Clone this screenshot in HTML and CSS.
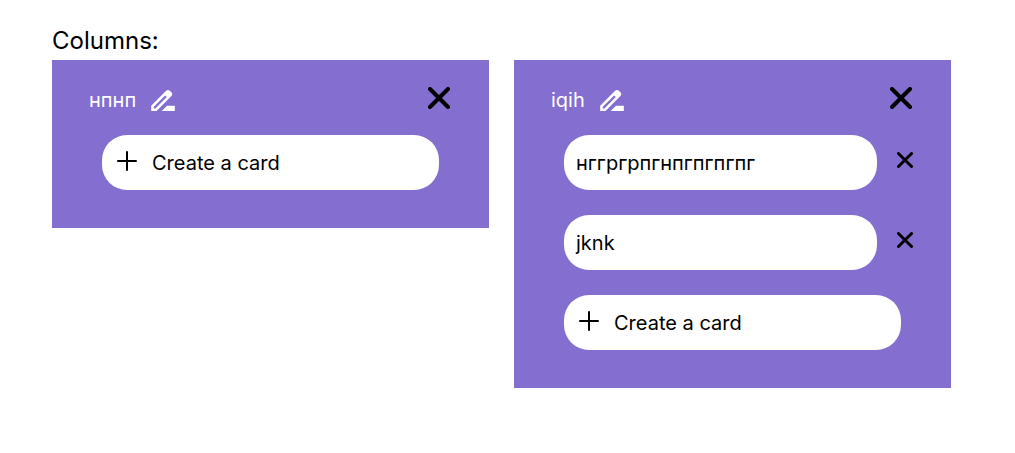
FILE: index.html
```html
<!DOCTYPE html>
<html lang="en">
<head>
<meta charset="utf-8">
<meta name="viewport" content="width=device-width, initial-scale=1">
<title>Columns</title>
<link rel="stylesheet" href="styles.css">
</head>
<body>
<svg class="sprite" aria-hidden="true">
  <symbol id="cross" viewBox="0 0 22 22"><path d="M2 2 20 20M20 2 2 20" fill="none" stroke="currentColor" stroke-width="4" stroke-linecap="round"/></symbol>
  <symbol id="plus" viewBox="0 0 20 20"><path d="M10 1V19M1 10H19" fill="none" stroke="currentColor" stroke-width="2" stroke-linecap="round"/></symbol>
  <symbol id="pencil" viewBox="3 4 18 16"><path d="M18.41 5.8 17.2 4.59c-.78-.78-2.05-.78-2.83 0l-2.68 2.68L3 15.96V20h4.04l8.74-8.74 2.63-2.63c.79-.78.79-2.05 0-2.83zM6.21 18H5v-1.21l8.66-8.66 1.21 1.21zM11 20l4-4h6v4z" fill="currentColor"/></symbol>
</svg>
<main class="board">
  <h1 class="board-title">Columns:</h1>
  <div class="columns">
    <section class="column">
      <header class="column-header">
        <h2 class="column-title">нпнп</h2>
        <button class="icon-button edit" type="button" aria-label="Edit column"><svg class="icon-pencil"><use href="#pencil"/></svg></button>
        <button class="icon-button close" type="button" aria-label="Delete column"><svg class="icon-cross"><use href="#cross"/></svg></button>
      </header>
      <div class="cards">
        <button class="card create" type="button"><svg class="icon-plus"><use href="#plus"/></svg>Create a card</button>
      </div>
    </section>
    <section class="column">
      <header class="column-header">
        <h2 class="column-title">iqih</h2>
        <button class="icon-button edit" type="button" aria-label="Edit column"><svg class="icon-pencil"><use href="#pencil"/></svg></button>
        <button class="icon-button close" type="button" aria-label="Delete column"><svg class="icon-cross"><use href="#cross"/></svg></button>
      </header>
      <div class="cards">
        <div class="card-row">
          <div class="card">нггргрпгнпгпгпгпг</div>
          <button class="icon-button remove" type="button" aria-label="Delete card"><svg class="icon-cross-small"><use href="#cross"/></svg></button>
        </div>
        <div class="card-row">
          <div class="card">jknk</div>
          <button class="icon-button remove" type="button" aria-label="Delete card"><svg class="icon-cross-small"><use href="#cross"/></svg></button>
        </div>
        <button class="card create" type="button"><svg class="icon-plus"><use href="#plus"/></svg>Create a card</button>
      </div>
    </section>
  </div>
</main>
</body>
</html>
```
FILE: styles.css
```css
* {
  box-sizing: border-box;
}

body {
  margin: 0;
  background: #fff;
  color: #000;
  font-family: Inter, "Liberation Sans", sans-serif;
  font-size: 20px;
  line-height: 24px;
}

.sprite {
  display: none;
}

.board {
  padding: 25px 64px 25px 52px;
}

.board-title {
  margin: 0 0 3px;
  font-size: 24px;
  font-weight: 400;
  line-height: 32px;
}

.columns {
  display: grid;
  grid-template-columns: 1fr 1fr;
  align-items: start;
  gap: 25px;
}

.column {
  padding: 25px 37px 38px;
  background: #846ecf;
}

.column-header {
  display: flex;
  align-items: flex-start;
  gap: 15px;
  height: 50px;
}

.column-title {
  margin: 0;
  padding-top: 3px;
  color: #fff;
  font-size: 20px;
  font-weight: 400;
}

.icon-button {
  display: flex;
  padding: 0;
  border: 0;
  background: none;
  color: #000;
  cursor: pointer;
}

.edit {
  padding-top: 5px;
  color: #fff;
}

.close {
  margin-right: 2px;
  margin-left: auto;
  padding-top: 2px;
}

.icon-pencil {
  width: 24px;
  height: 21px;
}

.icon-cross {
  width: 22px;
  height: 22px;
}

.icon-cross-small {
  width: 16px;
  height: 16px;
}

.icon-plus {
  width: 20px;
  height: 20px;
  margin-bottom: 4px;
}

.cards {
  display: flex;
  flex-direction: column;
  gap: 25px;
  padding: 0 13px;
}

.card-row {
  display: flex;
  align-items: center;
  gap: 20px;
  margin-right: -12px;
}

.card {
  display: flex;
  flex: 1;
  align-items: center;
  min-width: 0;
  min-height: 55px;
  padding: 0 12px;
  border: 0;
  border-radius: 25px;
  background: #fff;
  color: #000;
  font: inherit;
  font-weight: 400;
  text-align: left;
}

.create {
  gap: 15px;
  padding-left: 15px;
  cursor: pointer;
}

.remove {
  padding-bottom: 5px;
}
```
